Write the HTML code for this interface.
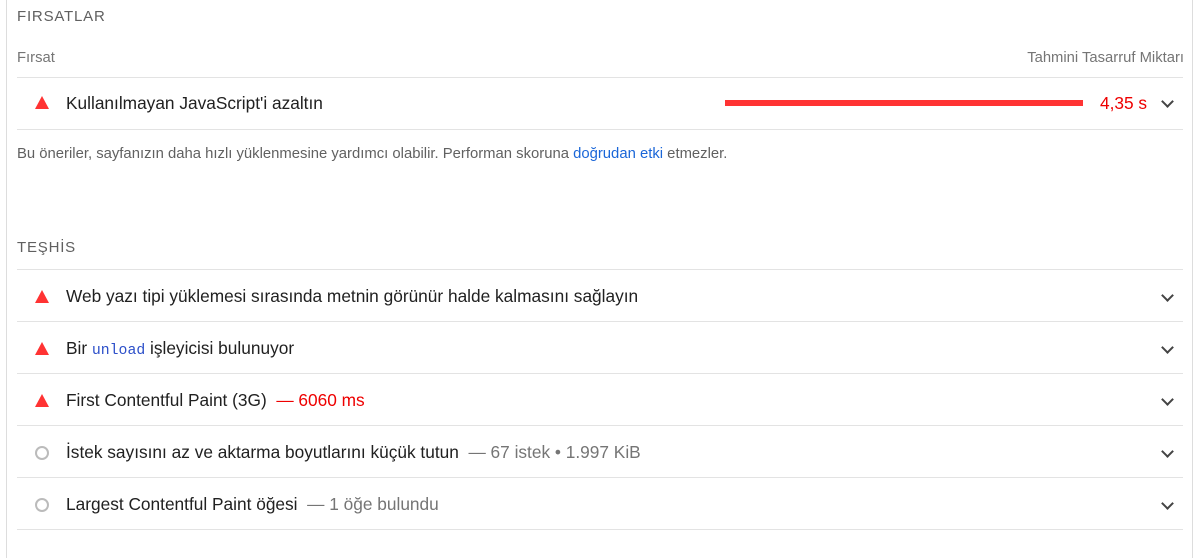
<!DOCTYPE html><html><head><meta charset="utf-8"><style>
body{margin:0;width:1200px;height:537px;background:#fff;font-family:"Liberation Sans",Arial,sans-serif;overflow:hidden;position:relative}
.frame{position:absolute;left:6px;top:-2px;width:1185px;height:560px;border-left:1px solid #ddd;border-right:1px solid #ddd}
.a{position:absolute;white-space:nowrap}
.hd{font-size:15px;color:#606060;letter-spacing:.8px}
.line{position:absolute;left:17px;width:1166px;height:1px;background:#e3e3e3}
.t{font-size:17.3px;color:#212121}
.tri{position:absolute;left:35px;width:0;height:0;border-left:7px solid transparent;border-right:7px solid transparent;border-bottom:13px solid #f33}
.circ{position:absolute;left:35px;width:10px;height:10px;border:2px solid #bbb;border-radius:50%}
.chev{position:absolute;left:1163px;width:7px;height:7px;border-right:2px solid #444;border-bottom:2px solid #444;transform:rotate(45deg)}
.g{color:#757575}
</style></head><body>
<div class="frame"></div>
<div class="a hd" style="left:17px;top:8px">FIRSATLAR</div>
<div class="a" style="left:17px;top:50px;font-size:14.8px;color:#757575">Fırsat</div>
<div class="a" style="right:16px;top:50px;font-size:14.8px;color:#757575">Tahmini Tasarruf Miktarı</div>
<div class="line" style="top:77px"></div>
<div class="tri" style="top:96px"></div>
<div class="a t" style="left:66px;top:93px">Kullanılmayan JavaScript'i azaltın</div>
<div class="a" style="left:725px;top:100px;width:358px;height:6px;background:#f33"></div>
<div class="a" style="left:1100px;top:93px;font-size:17.3px;color:#e00">4,35 s</div>
<div class="chev" style="top:97px"></div>
<div class="line" style="top:129px"></div>
<div class="a" style="left:17px;top:146px;font-size:14.85px;color:#616161">Bu öneriler, sayfanızın daha hızlı yüklenmesine yardımcı olabilir. Performan skoruna <span style="color:#1a66d8">doğrudan etki</span> etmezler.</div>
<div class="a hd" style="left:17px;top:239px">TEŞHİS</div>
<div class="line" style="top:269px"></div>
<div class="tri" style="top:290px"></div>
<div class="a t" style="left:66px;top:286px">Web yazı tipi yüklemesi sırasında metnin görünür halde kalmasını sağlayın</div>
<div class="chev" style="top:291px"></div>
<div class="line" style="top:321px"></div>
<div class="tri" style="top:342px"></div>
<div class="a t" style="left:66px;top:338px">Bir <span style="font-family:'Liberation Mono',monospace;font-size:14.8px;color:#2c4fc9">unload</span> işleyicisi bulunuyor</div>
<div class="chev" style="top:343px"></div>
<div class="line" style="top:373px"></div>
<div class="tri" style="top:394px"></div>
<div class="a t" style="left:66px;top:390px">First Contentful Paint (3G) <span style="color:#e00">&nbsp;— 6060 ms</span></div>
<div class="chev" style="top:395px"></div>
<div class="line" style="top:425px"></div>
<div class="circ" style="top:446px"></div>
<div class="a t" style="left:66px;top:442px">İstek sayısını az ve aktarma boyutlarını küçük tutun <span class="g">&nbsp;— 67 istek • 1.997 KiB</span></div>
<div class="chev" style="top:447px"></div>
<div class="line" style="top:477px"></div>
<div class="circ" style="top:498px"></div>
<div class="a t" style="left:66px;top:494px">Largest Contentful Paint öğesi <span class="g">&nbsp;— 1 öğe bulundu</span></div>
<div class="chev" style="top:499px"></div>
<div class="line" style="top:529px"></div>
</body></html>
